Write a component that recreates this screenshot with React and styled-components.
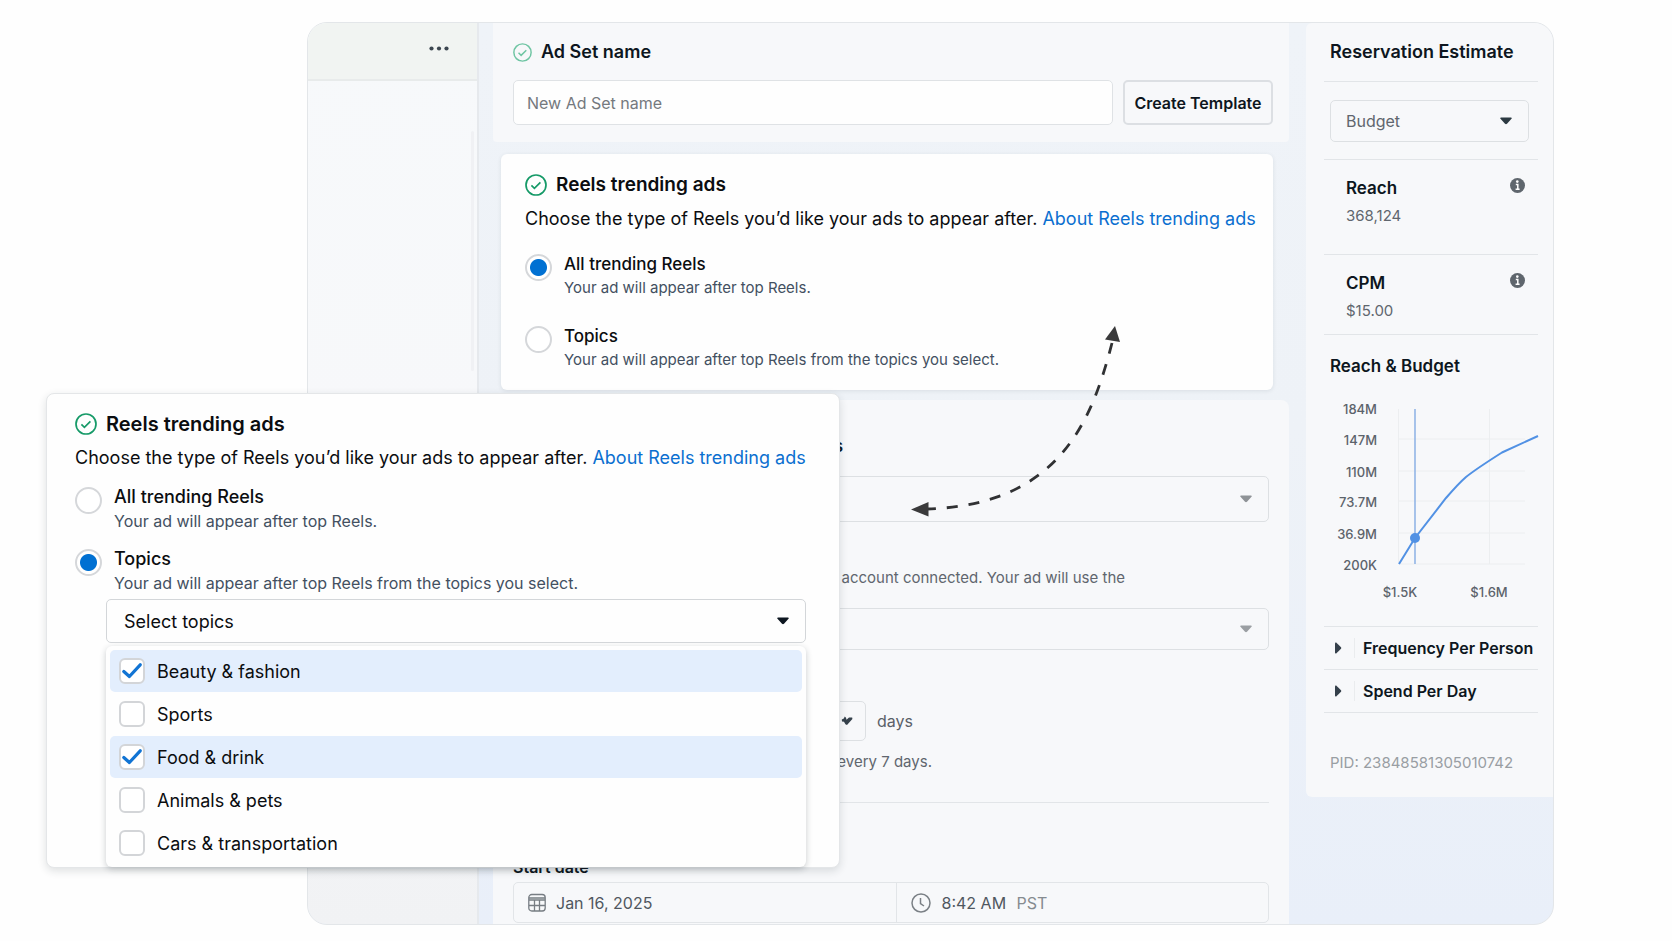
import React from 'react'
import styled, { createGlobalStyle } from 'styled-components'

const ink = '#0d1620'
const black = '#0b0d10'
const slate = '#435061'
const grey = '#60666e'
const paleGrey = '#999ea3'
const line = '#e2e5e8'
const blue = '#0070d2'
const chartBlue = '#5191e4'
const green = '#169a68'
const panel = '#f7f8fa'

const GlobalStyle = createGlobalStyle`
  * {
    box-sizing: border-box;
  }

  body {
    margin: 0;
    background: #fefefe;
    color: ${black};
    font-family: Inter, 'Liberation Sans', sans-serif;
  }

  h2, h3, p, fieldset {
    margin: 0;
    padding: 0;
    border: 0;
    min-width: 0;
  }

  button, input, select {
    font-family: inherit;
  }
`

const Stage = styled.main`
  position: relative;
  min-height: 100vh;
  padding: 22px 118px 17px 307px;
`

const Window = styled.div`
  display: flex;
  overflow: hidden;
  border: 1px solid #e3e6e9;
  border-radius: 20px;
  background: linear-gradient(to bottom, #eff3f8 0%, #eef2f7 45%, #e9eff9 100%);
`

/// left column

const Nav = styled.nav`
  display: flex;
  flex: none;
  width: 171px;
  border-right: 2px solid #e6e9ed;
  flex-direction: column;
  background: linear-gradient(to bottom, #f7f9fb 0%, #f7f8fa 45%, #f1f2f4 100%);
`

const NavHeader = styled.div`
  display: flex;
  justify-content: flex-end;
  align-items: center;
  height: 58px;
  padding: 0 24px 5px 0;
  border-bottom: 2px solid #e8ebeb;
  background: #f1f4f2;
`

const MoreButton = styled.button`
  display: flex;
  padding: 4px;
  border: 0;
  background: none;
`

const NavScroll = styled.div`
  align-self: flex-end;
  width: 3px;
  height: 240px;
  margin: 50px 3px 0 0;
  border-radius: 2px;
  background: #f0f1f4;
`

/// centre column

const Centre = styled.div`
  display: flex;
  flex: 1;
  flex-direction: column;
  min-width: 0;
  padding: 0 17px 0 14px;
`

const NameCard = styled.section`
  padding: 17px 16px 17px 20px;
  border-radius: 0 0 4px 4px;
  background: ${panel};
`

const TitleRow = styled.div`
  display: flex;
  align-items: center;
  gap: 9px;
`

const Title = styled.h2`
  font-size: ${props => props.$size || 18}px;
  line-height: 24px;
  font-weight: 600;
  color: ${props => props.$color || ink};
`

const NameRow = styled.div`
  display: flex;
  gap: 10px;
  margin-top: 16px;
`

const NameInput = styled.input`
  flex: 1;
  min-width: 0;
  height: 45px;
  padding: 0 13px;
  border: 1px solid #dfe2e5;
  border-radius: 5px;
  background: #fefefe;
  font-size: 16px;
  color: ${ink};

  &::placeholder {
    color: #75797e;
    opacity: 1;
  }
`

const TemplateButton = styled.button`
  width: 150px;
  height: 45px;
  padding: 0;
  border: 2px solid #dcdfe3;
  border-radius: 5px;
  background: ${panel};
  font-size: 16px;
  font-weight: 600;
  color: ${ink};
  white-space: nowrap;
`

const ReelsCard = styled.section`
  margin: 12px 16px 10px 8px;
  padding: 19px 24px;
  border-radius: 6px;
  background: #fefefe;
  box-shadow: 0 1px 4px rgba(30, 45, 60, 0.1);
`

const Intro = styled.p`
  margin: 10px 0 ${props => props.$after}px;
  font-size: 18px;
  line-height: 24px;
  white-space: nowrap;

  a {
    color: #0b6fd0;
    text-decoration: none;
  }
`

const Options = styled.fieldset`
  display: flex;
  flex-direction: column;
  gap: ${props => props.$gap}px;
`

const Option = styled.label`
  display: flex;
  align-items: flex-start;
  gap: 12px;
`

const Radio = styled.input`
  appearance: none;
  flex: none;
  width: 27px;
  height: 27px;
  margin: 2px 0 0;
  border: 2px solid #d5d7da;
  border-radius: 50%;
  background: #fff;

  &:checked {
    background: radial-gradient(circle, ${blue} 8px, #fff 9px);
  }
`

const OptionText = styled.span`
  display: flex;
  flex-direction: column;
  gap: 1px;
`

const OptionName = styled.span`
  font-size: ${props => props.$size}px;
  line-height: 24px;
  font-weight: 500;
`

const OptionHint = styled.span`
  font-size: ${props => props.$size}px;
  line-height: 22px;
  color: ${slate};
  white-space: nowrap;
`

const DetailCard = styled.section`
  flex: 1;
  padding: 34px 20px 0;
  border-radius: 8px 8px 0 0;
  background: ${panel};
`

const DetailTitle = styled.h2`
  width: 330px;
  margin-bottom: 18px;
  font-size: 17px;
  line-height: 24px;
  font-weight: 600;
  text-align: right;
  color: ${ink};
`

const DetailText = styled.p`
  width: ${props => props.$width}px;
  font-size: 15px;
  line-height: 22px;
  text-align: right;
  white-space: nowrap;
  color: ${grey};
`

const AccountText = styled(DetailText)`
  margin: 45px 0 19px;
`

/// drop-downs: the caret shares the grid cell of the select

const SelectBox = styled.div`
  display: grid;
  align-items: center;
  width: ${props => props.$width || 'auto'};

  > * {
    grid-area: 1 / 1;
  }

  svg {
    justify-self: end;
    margin-right: ${props => props.$inset || 17}px;
    pointer-events: none;
  }
`

const Select = styled.select`
  appearance: none;
  width: 100%;
  height: ${props => props.$height}px;
  padding: 0 40px 0 ${props => props.$indent || 15}px;
  border: 1px solid ${props => props.$border || '#dde0e3'};
  border-radius: 5px;
  background: ${props => props.$background || panel};
  font-size: ${props => props.$size || 16}px;
  color: ${props => props.$color || grey};
`

const DaysRow = styled.div`
  display: flex;
  align-items: center;
  gap: 11px;
  margin: 51px 0 10px;
  font-size: 16px;
  color: #5a6068;
`

const Rule = styled.hr`
  height: 1px;
  margin: ${props => props.$margin || '0'};
  border: 0;
  background: ${line};
`

const DateLabel = styled.label`
  display: block;
  margin: 52px 0 3px;
  font-size: 16px;
  line-height: 24px;
  font-weight: 600;
  color: ${ink};
`

const DateRow = styled.div`
  display: grid;
  grid-template-columns: 383fr 372fr;
  height: 41px;
  margin-bottom: 1px;
  border: 1px solid ${line};
  border-radius: 5px;
`

const DateCell = styled.div`
  display: flex;
  align-items: center;
  gap: 10px;
  padding: 0 14px;
  font-size: 16px;
  color: #868b90;

  & + & {
    border-left: 1px solid ${line};
  }
`

const DateInput = styled.input`
  width: ${props => props.$width}px;
  padding: 0;
  border: 0;
  background: none;
  font-size: 16px;
  color: #50575f;
`

/// right column

const Estimate = styled.aside`
  align-self: flex-start;
  flex: none;
  width: 247px;
  padding: 17px 15px 22px 18px;
  border-radius: 6px 0 0 6px;
  background: ${panel};
`

const Inset = styled.div`
  padding: 0 9px 0 6px;
`

const Metric = styled.div`
  display: flex;
  justify-content: space-between;
  padding: 16px 13px ${props => props.$after}px 22px;

  > svg {
    margin-top: 2px;
  }
`

const MetricName = styled.h3`
  font-size: 17px;
  line-height: 24px;
  font-weight: 600;
  color: ${ink};
`

const MetricValue = styled.p`
  margin-top: 2px;
  font-size: 15px;
  line-height: 28px;
  color: ${grey};
`

const ChartTitle = styled.h3`
  padding: 18px 6px 21px;
  font-size: 17px;
  line-height: 26px;
  font-weight: 600;
  color: ${ink};
`

const Chart = styled.svg`
  display: block;
  width: 100%;
  height: 226px;
  overflow: visible;

  text {
    font-size: 13px;
    font-weight: 500;
    fill: #5c636b;
  }
`

const Fold = styled.button`
  display: flex;
  align-items: center;
  width: 100%;
  height: 42px;
  padding: 0 0 0 10px;
  border: 0;
  background: none;
  font-size: 16px;
  font-weight: 600;
  text-align: left;
  white-space: nowrap;
  color: ${ink};

  span {
    margin-left: 12px;
    padding-left: 8px;
    border-left: 1px solid #eaecee;
  }
`

const Pid = styled.p`
  margin-top: 38px;
  padding-left: 6px;
  font-size: 15px;
  line-height: 24px;
  white-space: nowrap;
  color: ${paleGrey};
`

/// floating card

const Popup = styled.section`
  position: absolute;
  top: 393px;
  left: 46px;
  width: 794px;
  padding: 18px 28px 0;
  border: 1px solid #e4e6e8;
  border-radius: 8px;
  background: #fefefe;
  box-shadow: 0 3px 8px rgba(30, 40, 50, 0.14);
`

const TopicPicker = styled.div`
  margin: 5px 5px 0 31px;
`

const TopicMenu = styled.div`
  display: flex;
  flex-direction: column;
  gap: 1px;
  margin-top: 3px;
  padding: 4px 4px 3px;
  border-radius: 6px;
  background: #fefefe;
  box-shadow: 0 2px 6px rgba(30, 40, 50, 0.24);
`

const Topic = styled.label`
  display: flex;
  align-items: center;
  gap: 12px;
  height: 42px;
  padding-left: 9px;
  border-radius: 5px;
  font-size: 18px;
  color: ${black};

  &:has(:checked) {
    background: #e3eefd;
  }
`

const CheckBox = styled.span`
  display: grid;
  place-items: center;

  > * {
    grid-area: 1 / 1;
  }

  svg {
    visibility: hidden;
    pointer-events: none;
  }

  input:checked + svg {
    visibility: visible;
  }
`

const CheckInput = styled.input`
  appearance: none;
  width: 26px;
  height: 26px;
  margin: 0;
  border: 2px solid #d3d5d8;
  border-radius: 6px;
  background: #fff;
`

const ArrowLayer = styled.svg`
  position: absolute;
  top: 320px;
  left: 905px;
  pointer-events: none;
`

///

const DoneIcon = ({size = 22, color = green}) => (
  <svg width={size} height={size} viewBox="0 0 22 22" fill="none" stroke={color} aria-hidden="true">
    <circle cx="11" cy="11" r="10" strokeWidth="1.7" />
    <path d="M6.4 11.4l3 2.9 6-6" strokeWidth="1.7" />
  </svg>
)

const Caret = ({color = ink}) => (
  <svg width="12" height="8" viewBox="0 0 12 8" fill={color} aria-hidden="true">
    <path d="M1 .5h10c.8 0 1 .8.5 1.300L7 6.800c-.6.6-1.400.6-2 0L.5 1.800C0 1.300.2.5 1 .5z" />
  </svg>
)

const NotchedCaret = () => (
  <svg width="12" height="10" viewBox="0 0 12 10" fill="#35414b" aria-hidden="true">
    <path d="M.8 3.600L2.800 2.400 3.800.4 5 1.800 5.500 3.800 8 1.600 11.200 1.400 11.400 3 6 9 4.400 8.200 3 5.800 1 5.400z" />
  </svg>
)

const FoldIcon = () => (
  <svg width="8" height="12" viewBox="0 0 8 12" fill="#35404b" aria-hidden="true">
    <path d="M1 1.200v9.600c0 .8.7 1 1.200.6l4.800-4.700c.4-.4.4-1 0-1.400L2.200.6C1.700.2 1 .4 1 1.200z" />
  </svg>
)

const InfoIcon = () => (
  <svg width="15" height="15" viewBox="0 0 15 15" aria-hidden="true">
    <circle cx="7.5" cy="7.5" r="7.500" fill="#5f666d" />
    <circle cx="7.300" cy="3.600" r="1.300" fill="#fff" />
    <path d="M5.800 6.400h2v5M5.600 11.200h4" stroke="#fff" strokeWidth="1.500" fill="none" />
  </svg>
)

const CalendarIcon = () => (
  <svg width="18" height="19" viewBox="0 0 18 19" fill="none" stroke="#777d83" strokeWidth="1.300" aria-hidden="true">
    <rect x=".8" y="1.500" width="16.400" height="16.500" rx="3" />
    <path d="M1 5h16M1 7h16M1 12.500h16M6.500 7v11M11.500 7v11" />
  </svg>
)

const ClockIcon = () => (
  <svg width="20" height="20" viewBox="0 0 20 20" fill="none" stroke="#7b8086" strokeWidth="1.500" aria-hidden="true">
    <circle cx="10" cy="10" r="9" />
    <path d="M9.500 5v5.500l3.500 2.500" />
  </svg>
)

const CheckIcon = () => (
  <svg width="20" height="16" viewBox="0 0 20 16" fill="none" stroke="#1174d4" strokeWidth="3.200" aria-hidden="true">
    <path d="M1.800 8.500l5.600 5L18.200 1.800" strokeLinejoin="round" strokeLinecap="round" />
  </svg>
)

const yTicks = [
  {label: '184M', y: 9},
  {label: '147M', y: 40},
  {label: '110M', y: 72},
  {label: '73.7M', y: 102},
  {label: '36.9M', y: 134},
  {label: '200K', y: 165},
]

const ReachChart = () => (
  <Chart viewBox="0 0 214 226" preserveAspectRatio="xMinYMin meet" role="img" aria-label="Reach and budget">
    {
      yTicks.map(({label, y}, key) => (
        <g key={label}>
          { key > 0 && <path d={`M75 ${y - 1}h126`} stroke="#eceef0" /> }
          <text x="53" y={y + 5} textAnchor="end">{label}</text>
        </g>
      ))
    }
    <path d="M74.500 9v155M165.500 9v155" stroke="#eceef0" />
    <path d="M91 9v155" stroke="#92b5e6" strokeWidth="1.600" />
    <path d="M75 164L91 138 122 98 Q135 83 142 77 Q152 69 178 52.500 L214 36" fill="none" stroke={chartBlue} strokeWidth="2" />
    <circle cx="91" cy="138" r="5" fill={chartBlue} />
    <text x="76" y="197" textAnchor="middle">$1.5K</text>
    <text x="165" y="197" textAnchor="middle">$1.6M</text>
  </Chart>
)

const DragArrow = () => (
  <ArrowLayer width="225" height="205" viewBox="905 320 225 205" fill="#3a3a3b" aria-hidden="true">
    <path d="M1112 343C1092 420 1060 505 927 509" fill="none" stroke="#303133" strokeWidth="2.800" strokeDasharray="11 11" />
    <path d="M1115 326l5 16-15-2.500z" />
    <path d="M911 509.500l17.500-7.500v14.500z" />
  </ArrowLayer>
)

const ReelsForm = ({name, selected, after, gap, titleSize, nameSize, hintSize}) => (
  <>
    <TitleRow>
      <DoneIcon />
      <Title $size={titleSize} $color={black}>Reels trending ads</Title>
    </TitleRow>
    <Intro $after={after}>
      Choose the type of Reels you’d like your ads to appear after. <a href="#about">About Reels trending ads</a>
    </Intro>
    <Options $gap={gap}>
      <Option>
        <Radio type="radio" name={name} defaultChecked={selected === 'all'} />
        <OptionText>
          <OptionName $size={nameSize}>All trending Reels</OptionName>
          <OptionHint $size={hintSize}>Your ad will appear after top Reels.</OptionHint>
        </OptionText>
      </Option>
      <Option>
        <Radio type="radio" name={name} defaultChecked={selected === 'topics'} />
        <OptionText>
          <OptionName $size={nameSize}>Topics</OptionName>
          <OptionHint $size={hintSize}>Your ad will appear after top Reels from the topics you select.</OptionHint>
        </OptionText>
      </Option>
    </Options>
  </>
)

const topics = [
  {name: 'Beauty & fashion', checked: true},
  {name: 'Sports'},
  {name: 'Food & drink', checked: true},
  {name: 'Animals & pets'},
  {name: 'Cars & transportation'},
]

const App = () => (
  <>
    <GlobalStyle />
    <Stage>
      <Window>
        <Nav>
          <NavHeader>
            <MoreButton aria-label="More">
              <svg width="20" height="5" viewBox="0 0 20 5" fill="#3c4650">
                <circle cx="2.500" cy="2.500" r="2.100" />
                <circle cx="10" cy="2.500" r="2.100" />
                <circle cx="17.500" cy="2.500" r="2.100" />
              </svg>
            </MoreButton>
          </NavHeader>
          <NavScroll />
        </Nav>

        <Centre>
          <NameCard>
            <TitleRow>
              <DoneIcon size={19} color="#6fc5a3" />
              <Title>Ad Set name</Title>
            </TitleRow>
            <NameRow>
              <NameInput aria-label="Ad Set name" placeholder="New Ad Set name" />
              <TemplateButton>Create Template</TemplateButton>
            </NameRow>
          </NameCard>

          <ReelsCard>
            <ReelsForm
              name="reels"
              selected="all"
              after={21}
              gap={25}
              titleSize={19}
              nameSize={17}
              hintSize={15}
            />
          </ReelsCard>

          <DetailCard>
            <DetailTitle>Ads</DetailTitle>
            <SelectBox>
              <Select $height={46} aria-label="Facebook Page" />
              <Caret color="#8f9397" />
            </SelectBox>
            <AccountText $width={612}>Instagram account connected. Your ad will use the</AccountText>
            <SelectBox>
              <Select $height={42} aria-label="Instagram account" />
              <Caret color="#9b9fa3" />
            </SelectBox>
            <DaysRow>
              <SelectBox $width="353px" $inset={13}>
                <Select $height={40} aria-label="Frequency" />
                <NotchedCaret />
              </SelectBox>
              days
            </DaysRow>
            <DetailText $width={419}>every 7 days.</DetailText>
            <Rule $margin="29px 0 0" />
            <DateLabel htmlFor="start-date">Start date</DateLabel>
            <DateRow>
              <DateCell>
                <CalendarIcon />
                <DateInput id="start-date" $width={110} defaultValue="Jan 16, 2025" />
              </DateCell>
              <DateCell>
                <ClockIcon />
                <DateInput aria-label="Start time" $width={65} defaultValue="8:42 AM" />
                PST
              </DateCell>
            </DateRow>
          </DetailCard>
        </Centre>

        <Estimate>
          <Inset>
            <Title>Reservation Estimate</Title>
          </Inset>
          <Rule $margin="17px 0 18px" />
          <Inset>
            <SelectBox>
              <Select $height={42} aria-label="Estimate by" defaultValue="budget">
                <option value="budget">Budget</option>
              </Select>
              <Caret color="#2c3a42" />
            </SelectBox>
          </Inset>
          <Rule $margin="17px 0 0" />
          <Metric $after={24}>
            <div>
              <MetricName>Reach</MetricName>
              <MetricValue>368,124</MetricValue>
            </div>
            <InfoIcon />
          </Metric>
          <Rule />
          <Metric $after={9}>
            <div>
              <MetricName>CPM</MetricName>
              <MetricValue>$15.00</MetricValue>
            </div>
            <InfoIcon />
          </Metric>
          <Rule />
          <ChartTitle>Reach &amp; Budget</ChartTitle>
          <ReachChart />
          <Rule />
          <Fold>
            <FoldIcon />
            <span>Frequency Per Person</span>
          </Fold>
          <Rule />
          <Fold>
            <FoldIcon />
            <span>Spend Per Day</span>
          </Fold>
          <Rule />
          <Pid>PID: 23848581305010742</Pid>
        </Estimate>
      </Window>

      <Popup>
        <ReelsForm
          name="reels-topics"
          selected="topics"
          after={15}
          gap={15}
          titleSize={20}
          nameSize={18}
          hintSize={16}
        />
        <TopicPicker>
          <SelectBox>
            <Select
              $height={44}
              $indent={17}
              $size={18}
              $border="#d3d6d9"
              $background="#fefefe"
              $color={black}
              aria-label="Topics"
              defaultValue=""
            >
              <option value="">Select topics</option>
            </Select>
            <Caret />
          </SelectBox>
          <TopicMenu>
            {
              topics.map(({name, checked}) => (
                <Topic key={name}>
                  <CheckBox>
                    <CheckInput type="checkbox" defaultChecked={checked} />
                    <CheckIcon />
                  </CheckBox>
                  {name}
                </Topic>
              ))
            }
          </TopicMenu>
        </TopicPicker>
      </Popup>

      <DragArrow />
    </Stage>
  </>
)

export default App
